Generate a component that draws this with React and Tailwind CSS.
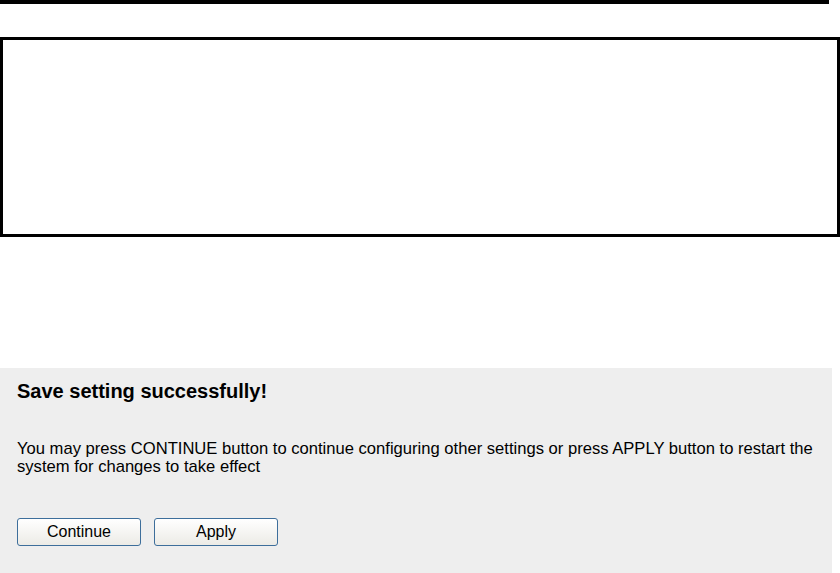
import React from "react";

const Button = ({ label }) => (
  <button
    type="button"
    className="h-[28px] w-[124px] rounded-[3px] border border-[#3d6e9b] bg-gradient-to-b from-[#ffffff] to-[#ecebe6] text-[16px] leading-[20px] text-black"
  >
    {label}
  </button>
);

export default function App() {
  return (
    <div className="flex h-[573px] w-[840px] flex-col bg-white font-['Liberation_Sans',Arial,sans-serif]">
      <div className="h-[4px] w-[829px] bg-black"></div>

      <div className="mt-[33px] h-[200px] w-[840px] border-[3px] border-black"></div>

      <div className="mt-[131px] flex h-[205px] w-[832px] flex-col bg-[#eeeeee] px-[17px]">
        <h2 className="mt-[13px] text-[20px] font-bold leading-[20px] text-black">
          Save setting successfully!
        </h2>
        <p className="mt-[39px] text-[16.6px] leading-[18px] text-black">
          You may press CONTINUE button to continue configuring other settings or press APPLY button to restart the
          system for changes to take effect
        </p>
        <div className="mt-[42px] flex gap-[13px]">
          <Button label="Continue" />
          <Button label="Apply" />
        </div>
      </div>
    </div>
  );
}
